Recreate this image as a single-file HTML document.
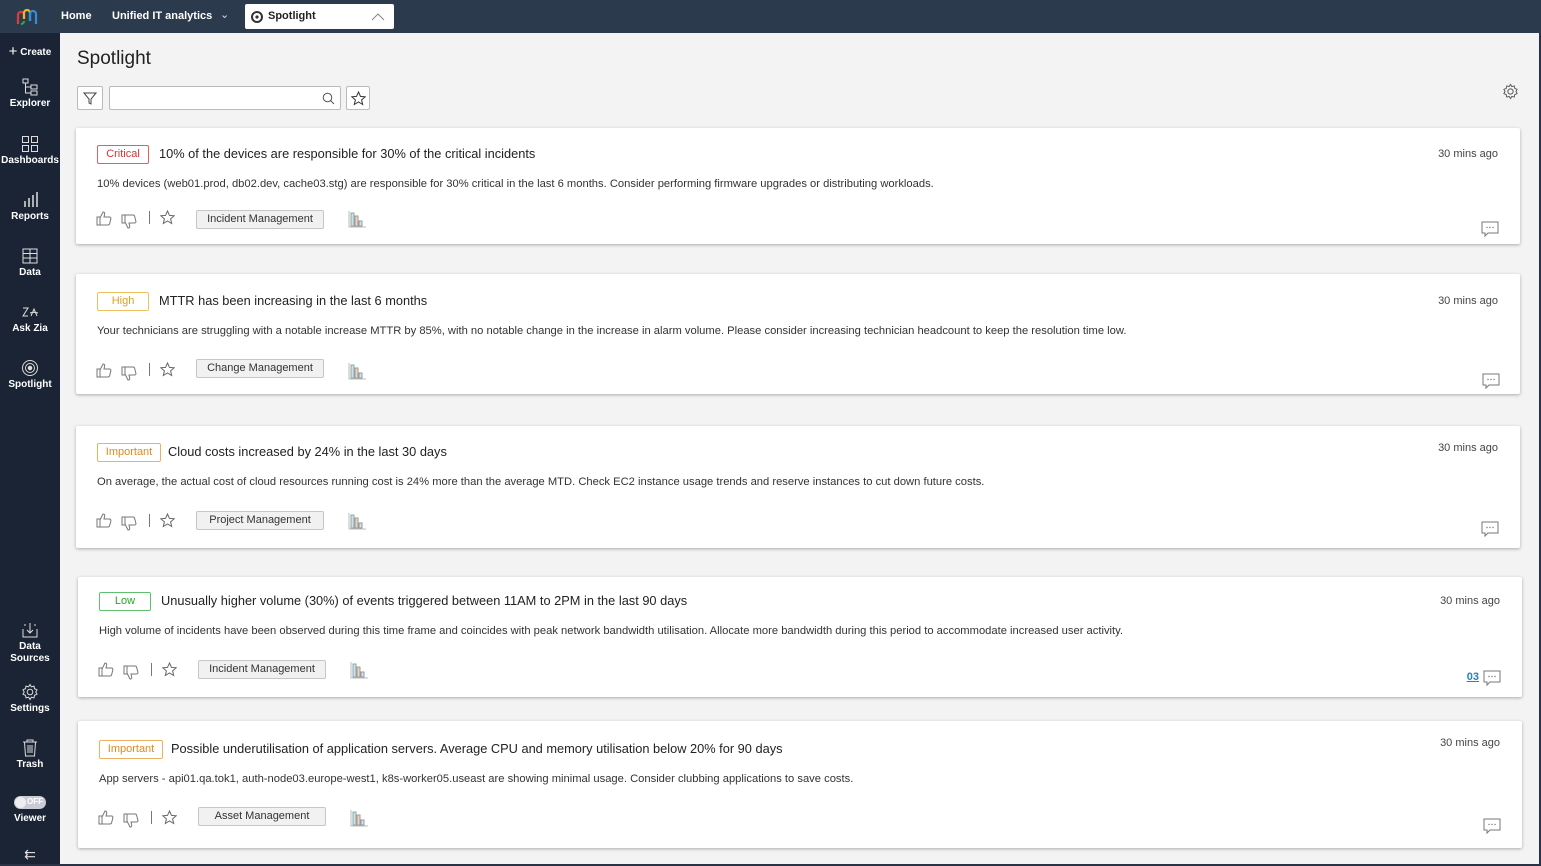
<!DOCTYPE html>
<html><head><meta charset="utf-8"><style>
*{box-sizing:border-box;margin:0;padding:0}
body{width:1541px;height:866px;overflow:hidden;background:#f3f3f3;font-family:"Liberation Sans",sans-serif;position:relative;color:#222}
#top{position:absolute;left:0;top:0;width:1541px;height:33px;background:#2c3a4d}
#side{position:absolute;left:0;top:33px;width:60px;height:833px;background:#1b2434}
.nav{position:absolute;left:0;width:60px;text-align:center;color:#fff;font-size:10px;font-weight:bold}
.nav svg{display:block;margin:0 auto 2px}
.card{position:absolute;background:#fff;box-shadow:0 1px 3px rgba(0,0,0,.3);border-radius:2px}
.card>*{position:absolute}
.badge{height:19px;line-height:17px;border:1px solid;border-radius:2px;font-size:11px;background:#fff;text-align:center}
.title{font-size:12.8px;color:#222;white-space:nowrap}
.desc{font-size:11.2px;color:#333;white-space:nowrap}
.time{font-size:11px;color:#444}
.tag{height:19px;line-height:17px;border:1px solid #c6c6c6;background:#f1f1f1;border-radius:2px;font-size:11px;color:#333;text-align:center;width:128px}
</style></head><body>
<div id="top">
 <svg style="position:absolute;left:16px;top:8px" width="24" height="18" viewBox="0 0 24 18"><path d="M2 16V7a3 3 0 0 1 6 0v4" stroke="#e03a3a" stroke-width="2.2" fill="none"/><path d="M8 11V5a3 3 0 0 1 6 0v8" stroke="#f0b429" stroke-width="2.2" fill="none"/><path d="M14 13V6a3 3 0 0 1 6 0v10" stroke="#2f8fd8" stroke-width="2.2" fill="none"/><path d="M5 16a3 3 0 0 0 3-3" stroke="#2aa84a" stroke-width="2.2" fill="none"/></svg>
 <div style="position:absolute;left:61px;top:10px;color:#fff;font-size:11px;font-weight:bold">Home</div>
 <div style="position:absolute;left:112px;top:10px;color:#fff;font-size:11px;font-weight:bold">Unified IT analytics</div>
 <div style="position:absolute;left:220px;top:8px;color:#ddd;font-size:11px">&#8964;</div>
 <div style="position:absolute;left:245px;top:4px;width:149px;height:25px;background:#fff;border-radius:2px">
  <svg style="position:absolute;left:6px;top:7px" width="12" height="12" viewBox="0 0 12 12"><circle cx="6" cy="6" r="5" fill="none" stroke="#333" stroke-width="2"/><circle cx="6" cy="6" r="1.6" fill="#333"/></svg>
  <div style="position:absolute;left:23px;top:6px;font-size:11px;font-weight:bold;color:#222">Spotlight</div>
  <svg style="position:absolute;right:9px;top:9px" width="14" height="8"><path d="M1 7l6-6 6 6" stroke="#888" fill="none"/></svg>
 </div>
</div>
<div id="side">
 <div class="nav" style="top:9px;font-size:10px"><span style="font-size:15px;font-weight:normal;position:relative;top:1px">+</span> Create</div>
 <div class="nav" style="top:45px"><svg width="18" height="18" viewBox="0 0 18 18" fill="none" stroke="#ddd"><rect x="2" y="1" width="5" height="4"/><rect x="10" y="7" width="6" height="4"/><rect x="10" y="13" width="6" height="4"/><path d="M4.5 5v10H10M4.5 9H10"/></svg>Explorer</div>
 <div class="nav" style="top:102px"><svg width="18" height="18" viewBox="0 0 18 18" fill="none" stroke="#ddd"><rect x="1.5" y="1.5" width="6" height="6"/><rect x="10.5" y="1.5" width="6" height="6"/><rect x="1.5" y="10.5" width="6" height="6"/><rect x="10.5" y="10.5" width="6" height="6"/></svg>Dashboards</div>
 <div class="nav" style="top:158px"><svg width="18" height="18" viewBox="0 0 18 18" stroke="#ddd" stroke-width="1.5"><path d="M4 16V10M8 16V7M12 16V4M16 16V1"/></svg>Reports</div>
 <div class="nav" style="top:214px"><svg width="18" height="18" viewBox="0 0 18 18" fill="none" stroke="#ddd"><rect x="2" y="2" width="14" height="14"/><path d="M2 6.5h14M2 11h14M9 2v14"/></svg>Data</div>
 <div class="nav" style="top:270px"><svg width="18" height="18" viewBox="0 0 18 18" fill="none" stroke="#ddd"><path d="M2 5h5L2 13h5M10 13l3-7 3 7M9 10c3-1 5-1 8 0"/></svg>Ask Zia</div>
 <div class="nav" style="top:326px"><svg width="18" height="18" viewBox="0 0 18 18" fill="none" stroke="#ddd"><circle cx="9" cy="9" r="7.5"/><circle cx="9" cy="9" r="4.5"/><circle cx="9" cy="9" r="1.8" fill="#ddd"/></svg>Spotlight</div>
 <div class="nav" style="top:588px;line-height:12px"><svg width="18" height="18" viewBox="0 0 18 18" fill="none" stroke="#ddd"><path d="M2 8v8h14V8M9 2v10M6 9l3 3 3-3M5 4h-2M15 4h-2"/></svg>Data<br>Sources</div>
 <div class="nav" style="top:650px"><svg width="18" height="18" viewBox="0 0 18 18" fill="none" stroke="#ddd"><circle cx="9" cy="9" r="2.8"/><path d="M9 1.5l1.4 2.3 2.6-.7.5 2.6 2.5 1-1.2 2.3 1.2 2.3-2.5 1-.5 2.6-2.6-.7L9 16.5l-1.4-2.3-2.6.7-.5-2.6-2.5-1L3.2 9 2 6.7l2.5-1 .5-2.6 2.6.7z"/></svg>Settings</div>
 <div class="nav" style="top:706px"><svg width="18" height="18" viewBox="0 0 18 18" fill="none" stroke="#ddd"><path d="M2 3h14M6 3V1h6v2M3.5 3l1 14h9l1-14M7 6v8M9 6v8M11 6v8"/></svg>Trash</div>
 <div class="nav" style="top:763px"><div style="width:32px;height:13px;border-radius:7px;background:#c9ccd2;margin:0 auto 4px;position:relative"><div style="position:absolute;left:1px;top:1px;width:11px;height:11px;border-radius:50%;background:#eee"></div><span style="position:absolute;right:3px;top:1px;font-size:8px;color:#fff">OFF</span></div>Viewer</div>
 <div class="nav" style="top:813px;font-size:14px;color:#ddd;font-weight:normal">&#8647;</div>
</div>
<div style="position:absolute;right:0;top:33px;width:2px;height:833px;background:#2a3345"></div>
<div style="position:absolute;left:0;bottom:0;width:1541px;height:2px;background:#2a3345"></div>

<div style="position:absolute;left:77px;top:48px;font-size:19px;color:#222">Spotlight</div>
<div style="position:absolute;left:77px;top:86px;width:26px;height:24px;background:#fff;border:1px solid #bbb;border-radius:2px"><svg style="margin:5px 0 0 5px" width="14" height="13"><path d="M1 1h12L8 7v5L6 11V7z" fill="none" stroke="#444"/></svg></div>
<div style="position:absolute;left:109px;top:86px;width:232px;height:24px;background:#fff;border:1px solid #bbb;border-radius:2px"><svg style="position:absolute;right:5px;top:5px" width="13" height="13"><circle cx="5.5" cy="5.5" r="4.3" fill="none" stroke="#555"/><path d="M8.5 8.5L12 12" stroke="#555"/></svg></div>
<div style="position:absolute;left:346px;top:86px;width:24px;height:24px;background:#fff;border:1px solid #bbb;border-radius:2px"><svg style="margin:4px 0 0 4px" width="15" height="15" viewBox="0 0 15 15"><path d="M7.5 1l2 4.4 4.7.4-3.6 3.1 1.1 4.6-4.2-2.5-4.2 2.5 1.1-4.6L.8 5.8l4.7-.4z" fill="none" stroke="#333"/></svg></div>
<svg style="position:absolute;left:1502px;top:83px" width="17" height="17" viewBox="0 0 18 18" fill="none" stroke="#555"><circle cx="9" cy="9" r="2.8"/><path d="M9 1.5l1.4 2.3 2.6-.7.5 2.6 2.5 1-1.2 2.3 1.2 2.3-2.5 1-.5 2.6-2.6-.7L9 16.5l-1.4-2.3-2.6.7-.5-2.6-2.5-1L3.2 9 2 6.7l2.5-1 .5-2.6 2.6.7z"/></svg>

<svg width="0" height="0" style="position:absolute"><defs>
<g id="up"><path d="M1 7h3v8H1zM4 8l3-6c1.5 0 2 1 1.6 2.5L8 7h5.5c1 0 1.6.8 1.4 1.8l-1.3 5c-.2.8-.9 1.2-1.6 1.2H4" fill="none" stroke="#777"/></g>
<g id="cm"><path d="M1 1h16v11H7l-3 3v-3H1z" fill="none" stroke="#777"/><circle cx="6" cy="6.5" r=".7" fill="#777"/><circle cx="9" cy="6.5" r=".7" fill="#777"/><circle cx="12" cy="6.5" r=".7" fill="#777"/></g>
<g id="ch"><path d="M1 1v16h17" stroke="#bbb" fill="none"/><rect x="3" y="3" width="3" height="13" fill="#cfe0ea" stroke="#8aa"/><rect x="7" y="6" width="3" height="10" fill="#e9d3c8" stroke="#a98"/><rect x="11" y="11" width="3" height="5" fill="#d8e4ee" stroke="#89a"/></g>
</defs></svg>

<div class="card" style="left:76px;top:128px;width:1444px;height:116px">
 <div class="badge" style="left:21px;top:17px;width:52px;color:#d33;border-color:#e06060">Critical</div>
 <div class="title" style="left:83px;top:18px">10% of the devices are responsible for 30% of the critical incidents</div>
 <div class="time" style="right:22px;top:20px">30 mins ago</div>
 <div class="desc" style="left:21px;top:50px">10% devices (web01.prod, db02.dev, cache03.stg) are responsible for 30% critical in the last 6 months. Consider performing firmware upgrades or distributing workloads.</div>
 <svg style="left:20px;top:82px" width="18" height="17"><use href="#up"/></svg>
 <svg style="left:45px;top:85px" width="18" height="17"><g transform="matrix(1 0 0 -1 0 17)"><use href="#up"/></g></svg>
 <div style="left:73px;top:83px;width:1px;height:13px;background:#777"></div>
 <svg style="left:84px;top:82px" width="15" height="15" viewBox="0 0 15 15"><path d="M7.5 1l2 4.4 4.7.4-3.6 3.1 1.1 4.6-4.2-2.5-4.2 2.5 1.1-4.6L.8 5.8l4.7-.4z" fill="none" stroke="#666"/></svg>
 <div class="tag" style="left:120px;top:82px">Incident Management</div>
 <svg style="left:272px;top:82px" width="20" height="18"><use href="#ch"/></svg>
 <svg style="right:21px;top:93px" width="18" height="16"><use href="#cm"/></svg>
</div>

<div class="card" style="left:76px;top:274px;width:1444px;height:120px">
 <div class="badge" style="left:21px;top:18px;width:52px;color:#e0a020;border-color:#efc060">High</div>
 <div class="title" style="left:83px;top:19px">MTTR has been increasing in the last 6 months</div>
 <div class="time" style="right:22px;top:21px">30 mins ago</div>
 <div class="desc" style="left:21px;top:51px">Your technicians are struggling with a notable increase MTTR by 85%, with no notable change in the increase in alarm volume. Please consider increasing technician headcount to keep the resolution time low.</div>
 <svg style="left:20px;top:88px" width="18" height="17"><use href="#up"/></svg>
 <svg style="left:45px;top:91px" width="18" height="17"><g transform="matrix(1 0 0 -1 0 17)"><use href="#up"/></g></svg>
 <div style="left:73px;top:89px;width:1px;height:13px;background:#777"></div>
 <svg style="left:84px;top:88px" width="15" height="15" viewBox="0 0 15 15"><path d="M7.5 1l2 4.4 4.7.4-3.6 3.1 1.1 4.6-4.2-2.5-4.2 2.5 1.1-4.6L.8 5.8l4.7-.4z" fill="none" stroke="#666"/></svg>
 <div class="tag" style="left:120px;top:85px">Change Management</div>
 <svg style="left:272px;top:88px" width="20" height="18"><use href="#ch"/></svg>
 <svg style="right:20px;top:99px" width="18" height="16"><use href="#cm"/></svg>
</div>

<div class="card" style="left:76px;top:426px;width:1444px;height:122px">
 <div class="badge" style="left:21px;top:17px;width:64px;color:#e08a20;border-color:#eeb060">Important</div>
 <div class="title" style="left:92px;top:18px">Cloud costs increased by 24% in the last 30 days</div>
 <div class="time" style="right:22px;top:16px">30 mins ago</div>
 <div class="desc" style="left:21px;top:50px">On average, the actual cost of cloud resources running cost is 24% more than the average MTD. Check EC2 instance usage trends and reserve instances to cut down future costs.</div>
 <svg style="left:20px;top:86px" width="18" height="17"><use href="#up"/></svg>
 <svg style="left:45px;top:89px" width="18" height="17"><g transform="matrix(1 0 0 -1 0 17)"><use href="#up"/></g></svg>
 <div style="left:73px;top:88px;width:1px;height:13px;background:#777"></div>
 <svg style="left:84px;top:87px" width="15" height="15" viewBox="0 0 15 15"><path d="M7.5 1l2 4.4 4.7.4-3.6 3.1 1.1 4.6-4.2-2.5-4.2 2.5 1.1-4.6L.8 5.8l4.7-.4z" fill="none" stroke="#666"/></svg>
 <div class="tag" style="left:120px;top:85px">Project Management</div>
 <svg style="left:272px;top:86px" width="20" height="18"><use href="#ch"/></svg>
 <svg style="right:21px;top:95px" width="18" height="16"><use href="#cm"/></svg>
</div>

<div class="card" style="left:78px;top:577px;width:1444px;height:120px">
 <div class="badge" style="left:21px;top:15px;color:#2a2;border-color:#60c070;width:52px">Low</div>
 <div class="title" style="left:83px;top:16px">Unusually higher volume (30%) of events triggered between 11AM to 2PM in the last 90 days</div>
 <div class="time" style="right:22px;top:18px">30 mins ago</div>
 <div class="desc" style="left:21px;top:48px">High volume of incidents have been observed during this time frame and coincides with peak network bandwidth utilisation. Allocate more bandwidth during this period to accommodate increased user activity.</div>
 <svg style="left:20px;top:84px" width="18" height="17"><use href="#up"/></svg>
 <svg style="left:45px;top:87px" width="18" height="17"><g transform="matrix(1 0 0 -1 0 17)"><use href="#up"/></g></svg>
 <div style="left:73px;top:86px;width:1px;height:13px;background:#777"></div>
 <svg style="left:84px;top:85px" width="15" height="15" viewBox="0 0 15 15"><path d="M7.5 1l2 4.4 4.7.4-3.6 3.1 1.1 4.6-4.2-2.5-4.2 2.5 1.1-4.6L.8 5.8l4.7-.4z" fill="none" stroke="#666"/></svg>
 <div class="tag" style="left:120px;top:83px">Incident Management</div>
 <svg style="left:272px;top:84px" width="20" height="18"><use href="#ch"/></svg>
 <div style="right:43px;top:94px;font-size:11px;font-weight:bold;color:#2a7fc0;text-decoration:underline">03</div>
 <svg style="right:21px;top:93px" width="18" height="16"><use href="#cm"/></svg>
</div>

<div class="card" style="left:78px;top:721px;width:1444px;height:127px">
 <div class="badge" style="left:21px;top:19px;width:64px;color:#e08a20;border-color:#eeb060">Important</div>
 <div class="title" style="left:93px;top:20px">Possible underutilisation of application servers. Average CPU and memory utilisation below 20% for 90 days</div>
 <div class="time" style="right:22px;top:16px">30 mins ago</div>
 <div class="desc" style="left:21px;top:52px">App servers - api01.qa.tok1, auth-node03.europe-west1, k8s-worker05.useast are showing minimal usage. Consider clubbing applications to save costs.</div>
 <svg style="left:20px;top:88px" width="18" height="17"><use href="#up"/></svg>
 <svg style="left:45px;top:91px" width="18" height="17"><g transform="matrix(1 0 0 -1 0 17)"><use href="#up"/></g></svg>
 <div style="left:73px;top:90px;width:1px;height:13px;background:#777"></div>
 <svg style="left:84px;top:89px" width="15" height="15" viewBox="0 0 15 15"><path d="M7.5 1l2 4.4 4.7.4-3.6 3.1 1.1 4.6-4.2-2.5-4.2 2.5 1.1-4.6L.8 5.8l4.7-.4z" fill="none" stroke="#666"/></svg>
 <div class="tag" style="left:120px;top:86px">Asset Management</div>
 <svg style="left:272px;top:88px" width="20" height="18"><use href="#ch"/></svg>
 <svg style="right:21px;top:97px" width="18" height="16"><use href="#cm"/></svg>
</div>
</body></html>
